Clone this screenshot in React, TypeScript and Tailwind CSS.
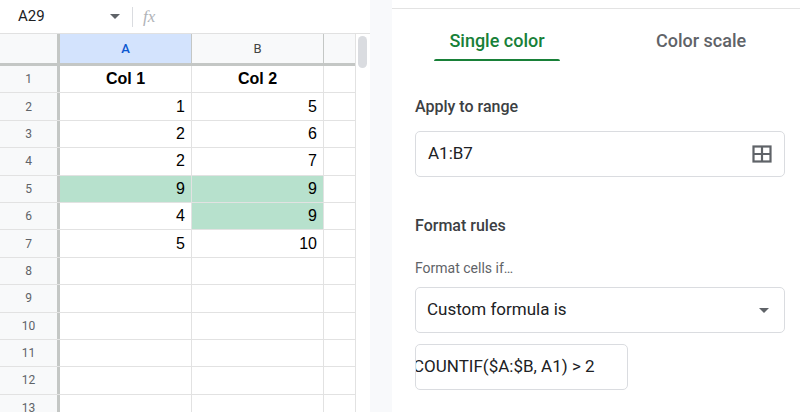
const font = { fontFamily: "Roboto, 'Liberation Sans', Arial, sans-serif" }
const cellFont = { fontFamily: "Arial, 'Liberation Sans', sans-serif" }

const rows: [string, string][] = [
  ["Col 1", "Col 2"],
  ["1", "5"],
  ["2", "6"],
  ["2", "7"],
  ["9", "9"],
  ["4", "9"],
  ["5", "10"],
  ["", ""],
  ["", ""],
  ["", ""],
  ["", ""],
  ["", ""],
  ["", ""],
]

function isGreen(r: number, c: number) {
  return (r === 4 && (c === 0 || c === 1)) || (r === 5 && c === 1)
}

function Sheet() {
  return (
    <div className="flex h-full w-[370px] flex-col bg-white" style={font}>
      <div className="flex h-[34px] shrink-0 items-center border-b border-[#e1e1e1]">
        <span className="ml-[18px] w-[92px] text-[15px] text-[#202124]">A29</span>
        <svg width="10" height="6" viewBox="0 0 10 6"><path d="M0 0h10L5 5z" fill="#5f6368" /></svg>
        <div className="ml-[12px] h-[20px] w-px bg-[#dadce0]" />
        <span className="ml-[10px] text-[17px] italic text-[#b0b3b8]" style={{ fontFamily: "'Liberation Serif', serif" }}>fx</span>
      </div>
      <div className="flex flex-1 overflow-hidden">
        <div className="flex w-[355px] flex-col">
          <div className="flex h-[32px] shrink-0 border-b-[3px] border-[#c4c7c5] text-[13px] text-[#444]">
            <div className="w-[60px] border-r-[3px] border-[#c4c7c5] bg-[#f8f9fa]" />
            <div className="flex w-[132px] items-center justify-center border-r border-[#c4c7c5] bg-[#d3e3fd] font-medium text-[#0b57d0]">A</div>
            <div className="flex w-[132px] items-center justify-center border-r border-[#c4c7c5] bg-[#f8f9fa]">B</div>
            <div className="flex-1 bg-[#f8f9fa]" />
          </div>
          {rows.map((r, i) => (
            <div key={i} className="flex h-[27.4px] shrink-0 border-b border-[#e2e2e2]">
              <div className="flex w-[60px] items-center justify-center border-r-[3px] border-[#c4c7c5] bg-[#f8f9fa] text-[12px] text-[#5f6368]">{i + 1}</div>
              {r.map((v, c) => (
                <div
                  key={c}
                  className={`flex w-[132px] items-center border-r border-[#e2e2e2] px-[6px] text-[16px] text-black ${i === 0 ? "justify-center font-bold" : "justify-end"} ${isGreen(i, c) ? "bg-[#b7e1cd]" : ""}`}
                  style={cellFont}
                >
                  {v}
                </div>
              ))}
              <div className="flex-1" />
            </div>
          ))}
        </div>
        <div className="w-[15px] border-l border-[#e2e2e2] pt-[2px] pl-[2px]">
          <div className="h-[32px] w-[9px] rounded-full bg-[#dadce0]" />
        </div>
      </div>
    </div>
  )
}

function Panel() {
  return (
    <div className="flex flex-1 flex-col bg-white" style={font}>
      <div className="mt-[8px] border-t border-[#e3e3e3]" />
      <div className="flex h-[52px] pt-[20px]">
        <div className="ml-[42px] flex w-[126px] flex-col items-center">
          <span className="text-[18px] font-medium leading-[24px] text-[#188038]">Single color</span>
          <div className="mt-[6px] h-[4px] w-full rounded-t-full bg-[#188038]" />
        </div>
        <span className="ml-[96px] text-[18px] font-medium leading-[24px] text-[#5f6368]">Color scale</span>
      </div>
      <div className="px-[23px] pr-[15px]">
        <div className="mt-[34px] text-[16px] font-medium text-[#3c4043]">Apply to range</div>
        <div className="mt-[12px] flex h-[46px] items-center justify-between rounded-[5px] border border-[#dadce0] px-[12px]">
          <span className="text-[17px] text-[#202124]">A1:B7</span>
          <svg width="20" height="20" viewBox="0 0 20 20" fill="none" stroke="#5f6368" strokeWidth="2.2">
            <rect x="1.5" y="2.5" width="17" height="15" />
            <path d="M10 2.5v15M1.5 10h17" />
          </svg>
        </div>
        <div className="mt-[37px] text-[16px] font-medium text-[#3c4043]">Format rules</div>
        <div className="mt-[20px] text-[14px] text-[#5f6368]">Format cells if…</div>
        <div className="mt-[8px] flex h-[46px] items-center justify-between rounded-[5px] border border-[#dadce0] pl-[11px] pr-[15px]">
          <span className="text-[17px] text-[#202124]">Custom formula is</span>
          <svg width="10" height="5" viewBox="0 0 10 5"><path d="M0 0h10L5 5z" fill="#5f6368" /></svg>
        </div>
        <div className="mt-[11px] flex h-[46px] w-[213px] items-center overflow-hidden rounded-[5px] border border-[#dadce0]">
          <span className="-ml-[3px] whitespace-nowrap text-[17px] text-[#202124]">COUNTIF($A:$B, A1) &gt; 2</span>
        </div>
      </div>
    </div>
  )
}

export default function App() {
  return (
    <div className="flex h-[412px] w-[800px] overflow-hidden bg-white">
      <Sheet />
      <div className="w-[22px] bg-[#f8f9fb]" />
      <Panel />
    </div>
  )
}
